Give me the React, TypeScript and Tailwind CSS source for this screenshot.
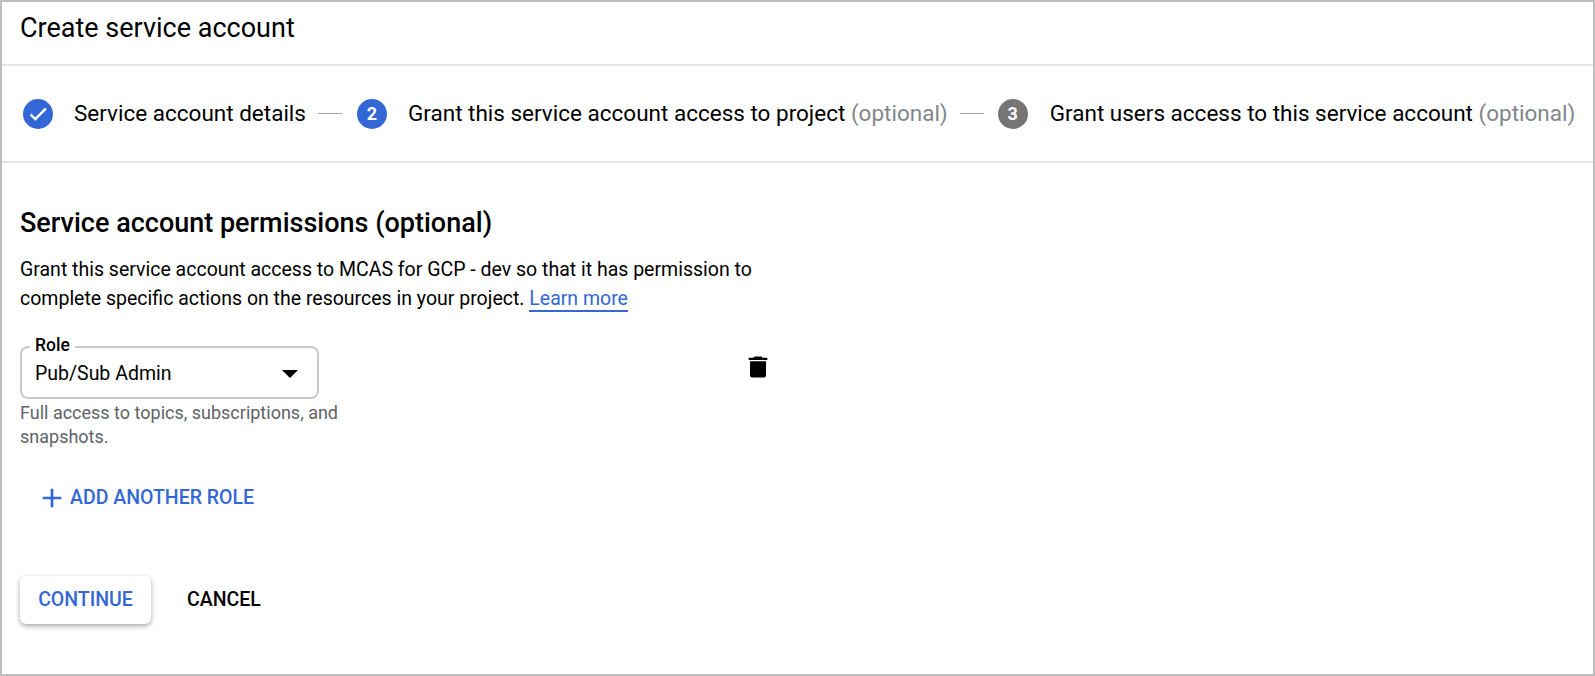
function StepDot({ children, done, muted }: { children?: React.ReactNode; done?: boolean; muted?: boolean }) {
  return (
    <span
      className={`flex size-[30px] shrink-0 items-center justify-center rounded-full text-[18px] font-bold text-white ${
        muted ? "bg-[#757575]" : "bg-[#3367d6]"
      }`}
    >
      {done ? (
        <svg width="22" height="22" viewBox="0 0 24 24" fill="white">
          <path d="M9 16.17L4.83 12l-1.41 1.41L9 19 21 7l-1.41-1.41z" stroke="white" strokeWidth="0.8" />
        </svg>
      ) : (
        children
      )}
    </span>
  );
}

export default function App() {
  return (
    <div className="h-[676px] w-[1595px] overflow-hidden border-2 border-[#bdbdbd] bg-white font-['Roboto',sans-serif] text-black">
      <header className="flex h-[64px] items-center border-b-2 border-[#e5e5e5] pb-[9px] pl-[18px] text-[27px]">
        Create service account
      </header>

      <nav className="flex h-[97px] items-center border-b-2 border-[#e5e5e5] pl-[21px] text-[22.5px] whitespace-nowrap">
        <StepDot done />
        <span className="ml-[21px]">Service account details</span>
        <span className="ml-3 mr-[15px] h-px w-6 shrink-0 bg-[#9e9e9e]" />
        <StepDot>2</StepDot>
        <span className="ml-[21px]">
          Grant this service account access to project <span className="text-[#80868b]">(optional)</span>
        </span>
        <span className="ml-3 mr-[14px] h-px w-6 shrink-0 bg-[#9e9e9e]" />
        <StepDot muted>3</StepDot>
        <span className="ml-[22px]">
          Grant users access to this service account <span className="text-[#80868b]">(optional)</span>
        </span>
      </nav>

      <main className="pl-[18px] pt-[44px]">
        <h2 className="text-[27px] font-medium leading-[32px]">Service account permissions (optional)</h2>
        <p className="mt-[16px] w-[740px] text-[19.5px] leading-[29px]">
          Grant this service account access to MCAS for GCP - dev so that it has permission to complete specific
          actions on the resources in your project.{" "}
          <a className="border-b-2 border-[#3367d6] text-[#3367d6]">Learn more</a>
        </p>

        <div className="mt-[33px] flex w-[760px] items-start justify-between">
          <div className="w-[299px]">
            <div className="relative flex h-[53px] items-center justify-between rounded-lg border-2 border-[#c9c9c9] pl-[13px] pr-[19px] pt-[2px] text-[19.5px]">
              <span className="absolute -top-[13px] left-[8px] bg-white px-[5px] text-[17.5px] font-medium leading-[20px]">
                Role
              </span>
              <span>Pub/Sub Admin</span>
              <span className="h-0 w-0 border-x-[8px] border-t-[8px] border-x-transparent border-t-black" />
            </div>
            <p className="mt-[2px] w-[330px] text-[18px] leading-[24px] text-[#5f6368]">
              Full access to topics, subscriptions, and snapshots.
            </p>
          </div>
          <svg width="32" height="28" viewBox="0 0 24 24" preserveAspectRatio="none" className="mr-[6px] mt-[7px]">
            <path d="M6 19c0 1.1.9 2 2 2h8c1.1 0 2-.9 2-2V7H6v12zM19 4h-3.5l-1-1h-5l-1 1H5v2h14V4z" />
          </svg>
        </div>

        <button className="ml-[16px] mt-[33px] flex items-center gap-[2px] text-[19.5px] font-medium text-[#3367d6]">
          <svg width="32" height="32" viewBox="0 0 24 24" fill="#3367d6">
            <path d="M19 13h-6v6h-2v-6H5v-2h6V5h2v6h6v2z" />
          </svg>
          ADD ANOTHER ROLE
        </button>

        <div className="mt-[62px] flex items-center gap-9 text-[19.5px] font-medium">
          <button className="h-[48px] w-[131px] rounded-md bg-white text-[#3367d6] shadow-[0_2px_5px_rgba(0,0,0,0.35)]">
            CONTINUE
          </button>
          <button>CANCEL</button>
        </div>
      </main>
    </div>
  );
}
